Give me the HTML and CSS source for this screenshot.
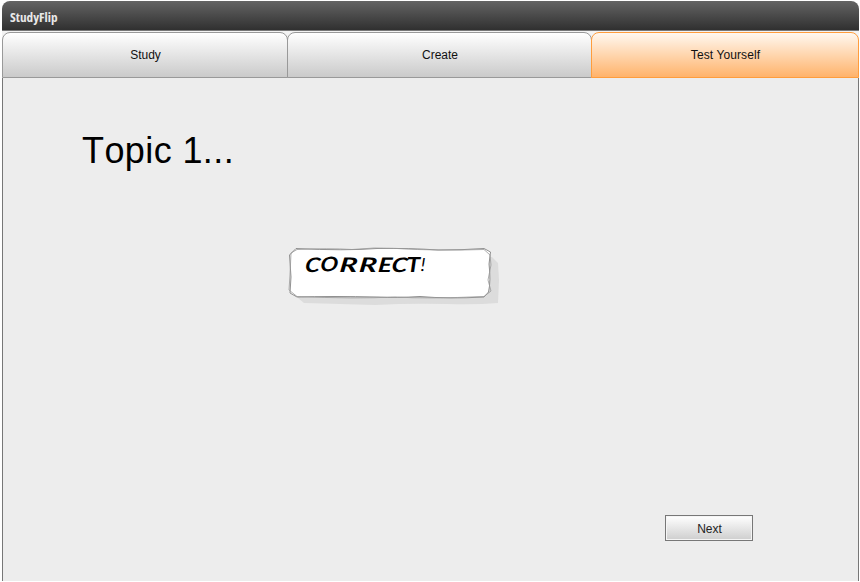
FILE: index.html
```html
<!DOCTYPE html>
<html lang="en">
<head>
<meta charset="utf-8">
<title>StudyFlip</title>
<link rel="stylesheet" href="styles.css">
</head>
<body>
<div class="window">
  <header class="titlebar"><span class="brand">StudyFlip</span></header>
  <nav class="tabs">
    <a class="tab tab-study">Study</a>
    <a class="tab tab-create">Create</a>
    <a class="tab tab-test">Test Yourself</a>
  </nav>
  <main class="content">
    <h1 class="topic">Topic 1...</h1>
    <svg class="card" width="214" height="62" viewBox="287 246 214 62" role="img">
      <path fill="#dcdcdc" d="M298 257 L492 257 L498 263 L499 280 L498 303 Q475 305 447 304 Q410 303 375 305 Q340 304 304 303 L298 298Z"/>
      <path fill="#fff" d="M296 248.500 Q345 251 377 248.500 Q410 248 438 250 Q463 250 484 248.500 L490.500 252 L489 264 Q491 281 488.500 292 L484 297 Q449 299 420 296.500 Q395 298 379 297 Q330 296 297 297 L290 293 L291 277 L289.500 255Z"/>
      <g fill="none" stroke="#777" stroke-width=".8">
        <path d="M296 248.500 Q345 251 377 248.500 Q410 248 438 250 Q463 250 484 248.500 L490.500 252 L489 264 Q491 281 488.500 292 L484 297 Q449 299 420 296.500 Q395 298 379 297 Q330 296 297 297 L290 293 L291 277 L289.500 255Z"/>
        <path stroke="#999" d="M297 249.500 Q328 248 352 249.500 Q374 247 397 248.500 Q437 251 484 249.500 L490 255 L491 265 L488 280 L491 291 L484 296.500 Q428 299 395 297 Q355 299 297 296.500 L289 290 L290 275 L291 253Z"/>
      </g>
      <g class="hand">
        <text transform="translate(304.500 271.500) skewX(-6) scale(1.200 1)">C</text>
        <text transform="translate(320 271.500) rotate(-2) skewX(-6) scale(1.180 1)">O</text>
        <text transform="translate(339 271.500) skewX(-6) scale(1.500 1)">R</text>
        <text transform="translate(358.500 271.500) skewX(-6) scale(1.500 1)">R</text>
        <text transform="translate(377.500 271.500) skewX(-6) scale(1.300 1)">E</text>
        <text transform="translate(391 271.500) skewX(-6) scale(1.280 1)">C</text>
        <text transform="translate(406.500 271.500) scale(1.230 1)">T</text>
        <text class="thin" transform="translate(420.500 270.500) skewX(-2)">!</text>
      </g>
    </svg>
    <button class="next">Next</button>
  </main>
</div>
</body>
</html>
```
FILE: styles.css
```css
* { box-sizing: border-box; }
body {
  margin: 0;
  height: 582px;
  overflow: hidden;
  background: #fff;
  font: 12px "Liberation Sans", Arial, sans-serif;
  color: #111;
}
.window {
  display: flex;
  flex-direction: column;
  width: 857px;
  height: 580px;
  margin: 1px 0 0 2px;
}
.titlebar {
  display: flex;
  align-items: center;
  height: 30px;
  padding: 4px 0 0 8px;
  border-radius: 8px 8px 0 0;
  border-bottom: 1px solid #777;
  background: linear-gradient(#646464, #303030);
}
.brand {
  font: bold 12px "Open Sans", sans-serif;
  font-stretch: condensed;
  color: #e8e8e8;
  transform: scaleX(1.1);
  transform-origin: left;
}
.tabs {
  display: flex;
  height: 47px;
  padding-top: 1px;
  background: #f3f3f3;
}
.tab {
  display: flex;
  align-items: center;
  justify-content: center;
  padding-left: 1px;
  border: 1px solid #999;
  border-radius: 8px 8px 0 0;
  background: linear-gradient(#fff, #cacaca);
}
.tab-study { width: 286px; }
.tab-create { width: 305px; margin-left: -1px; }
.tab-test {
  flex: 1;
  margin-left: -1px;
  border-color: #ff9d3c;
  background: linear-gradient(#fff8f0, #ffb36b);
  letter-spacing: .1px;
}
.content {
  flex: 1;
  display: flex;
  flex-direction: column;
  align-items: flex-start;
  padding-top: 52px;
  border: solid #777;
  border-width: 0 1px;
  background: #ededed;
}
.topic {
  margin: 0 0 0 79px;
  font-size: 36px;
  font-weight: 400;
  line-height: 42px;
  font-kerning: none;
  letter-spacing: .4px;
  color: #000;
}
.card { display: block; margin: 74px 0 0 284px; }
.hand {
  font: italic 700 20px Lato, sans-serif;
  fill: #000;
}
.thin { font-weight: 400; font-size: 18px; }
.next {
  width: 88px;
  height: 26px;
  margin: 207px 0 0 662px;
  padding: 1px 0 0 1px;
  border: 1px solid #777;
  box-shadow: inset 0 0 0 1px #f5f5f5;
  background: linear-gradient(#fff, #cecece);
  font: 12px "Liberation Sans", Arial, sans-serif;
  color: #222;
}
```
